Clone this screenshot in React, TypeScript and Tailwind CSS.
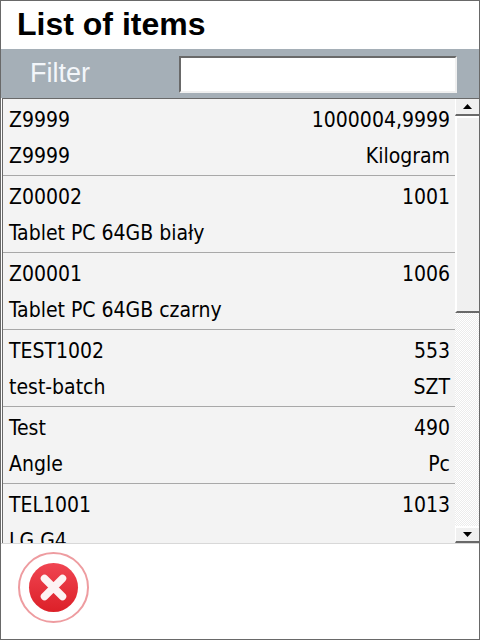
const rows: [string, string, string, string][] = [
  ["Z9999", "1000004,9999", "Z9999", "Kilogram"],
  ["Z00002", "1001", "Tablet PC 64GB biały", ""],
  ["Z00001", "1006", "Tablet PC 64GB czarny", ""],
  ["TEST1002", "553", "test-batch", "SZT"],
  ["Test", "490", "Angle", "Pc"],
  ["TEL1001", "1013", "LG G4", ""],
];

export default function App() {
  return (
    <div className="w-[480px] h-[640px] flex flex-col bg-white border border-[#696969] overflow-hidden font-['DejaVu_Sans_Condensed','DejaVu_Sans',sans-serif]">
      <div className="h-12 shrink-0 pl-4 pb-[2px] flex items-center font-['Liberation_Sans',sans-serif] font-bold text-[32px] leading-none text-black">
        List of items
      </div>
      <div className="h-[49px] shrink-0 bg-[#a5afb7] flex items-center font-['Liberation_Sans',sans-serif]">
        <span className="ml-[29px] w-[149px] text-[27px] leading-none text-[#f3f6fa]">Filter</span>
        <div className="mt-[2px] w-[278px] h-[37px] bg-white border-2 border-t-[#696969] border-l-[#696969] border-r-[#f0f0f0] border-b-[#f0f0f0]" />
      </div>
      <div className="h-[445px] shrink-0 ml-px flex border-t border-l border-[#696969] bg-[#f3f3f3]">
        <div className="flex-1 min-w-0 overflow-hidden">
          {rows.map((r, i) => (
            <div key={i} className="h-[77px] shrink-0 pl-[6px] pr-[5px] border-b border-[#a8a8a8] text-[21px] leading-[36px] text-black">
              <div className="flex justify-between pt-[3px]">
                <span>{r[0]}</span>
                <span>{r[1]}</span>
              </div>
              <div className="flex justify-between">
                <span>{r[2]}</span>
                <span>{r[3]}</span>
              </div>
            </div>
          ))}
        </div>
        <div className="w-6 shrink-0 flex flex-col bg-[#f0f0f0]">
          <div className="h-[17px] shrink-0 flex items-center justify-center border-l border-white border-b-2 border-b-[#696969]">
            <svg width="9" height="5" viewBox="0 0 9 5"><path d="M4.5 0 9 5H0z" fill="#000" /></svg>
          </div>
          <div className="h-[197px] shrink-0 border-l-2 border-t-2 border-white border-b-2 border-b-[#696969] bg-[#f0f0f0]" />
          <div className="flex-1 bg-[repeating-conic-gradient(#ececec_0_25%,#ffffff_0_50%)] bg-[length:2px_2px]" />
          <div className="h-[17px] shrink-0 flex items-center justify-center border-l border-t-2 border-white border-b-2 border-b-[#696969]">
            <svg width="9" height="5" viewBox="0 0 9 5"><path d="M0 0h9L4.500 5z" fill="#000" /></svg>
          </div>
        </div>
      </div>
      <div className="flex-1 pl-[17px] pt-[8px] bg-white border-t border-[#d8d8d8]">
        <svg width="72" height="72" viewBox="0 0 72 72">
          <defs>
            <linearGradient id="g" x1="0" y1="0" x2="0" y2="1">
              <stop offset="0" stopColor="#f04552" />
              <stop offset="1" stopColor="#dc2028" />
            </linearGradient>
          </defs>
          <circle cx="35.500" cy="35.500" r="34.500" fill="#fff" stroke="#ee9ca0" strokeWidth="2" />
          <circle cx="35.500" cy="35.500" r="24.500" fill="url(#g)" />
          <path d="M26.500 26.500 44.500 44.500M44.500 26.500 26.500 44.500" stroke="#fdf3f3" strokeWidth="7.500" strokeLinecap="round" />
        </svg>
      </div>
    </div>
  );
}
